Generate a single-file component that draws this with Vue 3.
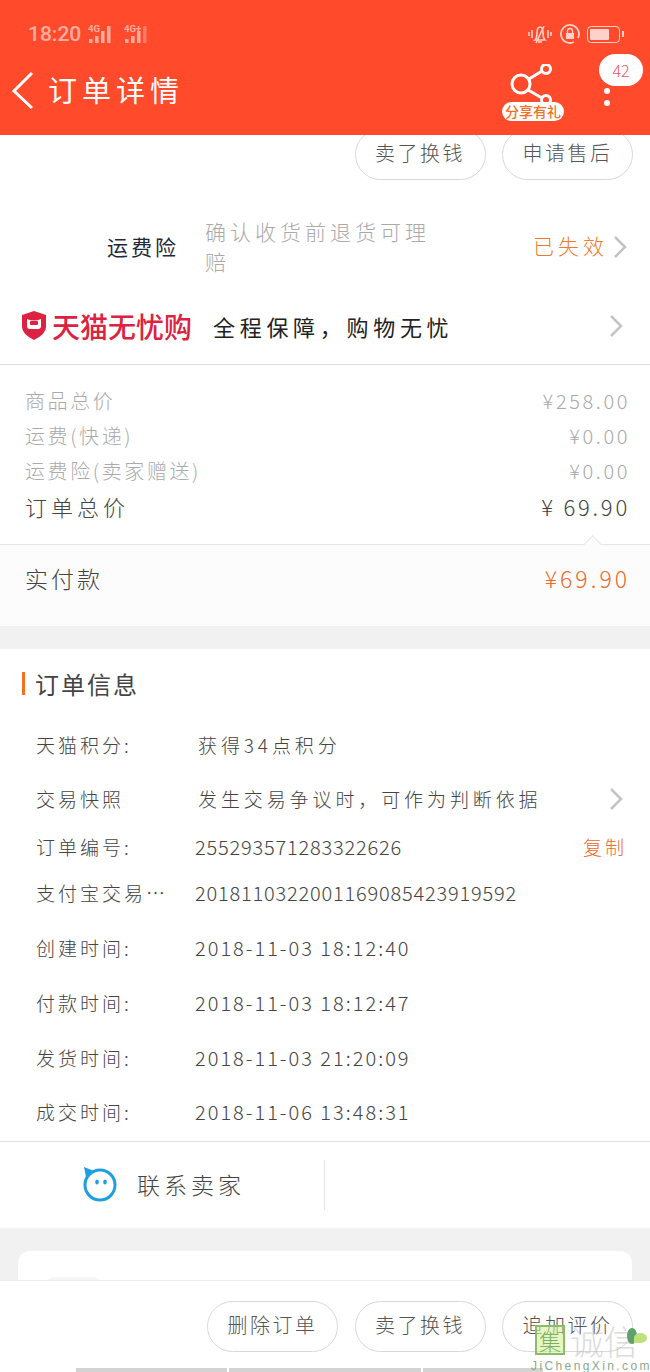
<script setup>
const feeRows = [
  { label: "商品总价", value: "¥258.00" },
  { label: "运费(快递)", value: "¥0.00" },
  { label: "运费险(卖家赠送)", value: "¥0.00" },
];

const infoRows = [
  { label: "天猫积分:", value: "获得34点积分", h: 54, kind: "wide" },
  { label: "交易快照", value: "发生交易争议时，可作为判断依据", h: 54, kind: "wide", arrow: true },
  { label: "订单编号:", value: "255293571283322626", h: 42, copy: true },
  { label: "支付宝交易…", value: "2018110322001169085423919592", h: 50 },
  { label: "创建时间:", value: "2018-11-03 18:12:40", h: 60, kind: "date" },
  { label: "付款时间:", value: "2018-11-03 18:12:47", h: 50, kind: "date" },
  { label: "发货时间:", value: "2018-11-03 21:20:09", h: 60, kind: "date" },
  { label: "成交时间:", value: "2018-11-06 13:48:31", h: 48, kind: "date" },
];
</script>

<template>
  <div class="page">
    <header class="header">
      <div class="status">
        <div class="status__left">
          <span class="status__time">18:20</span>
          <svg width="28" height="20" viewBox="0 0 28 20">
            <text x="0" y="8" font-size="9.5" font-weight="700" fill="#fff" font-family="Roboto, sans-serif">4G</text>
            <rect x="1" y="15" width="3.5" height="4" fill="#fff" />
            <rect x="7" y="12" width="3.5" height="7" fill="#fff" />
            <rect x="13" y="7" width="3.5" height="12" fill="#fff" />
            <rect x="19" y="2" width="3.5" height="17" fill="#fff" />
          </svg>
          <svg width="30" height="20" viewBox="0 0 30 20">
            <text x="1" y="8" font-size="9.5" font-weight="700" fill="#fff" font-family="Roboto, sans-serif">4G+</text>
            <rect x="2" y="15" width="3.5" height="4" fill="#fff" />
            <rect x="8" y="12" width="3.5" height="7" fill="#fff" />
            <rect x="14" y="7" width="3.5" height="12" fill="#fff" />
            <rect x="20" y="2" width="3.5" height="17" fill="#fff" opacity="0.5" />
          </svg>
        </div>
        <div class="status__right">
          <svg width="26" height="22" viewBox="0 0 26 22" fill="none" stroke="#fff" stroke-width="1.6">
            <path d="M8 17 Q10 15 10 10 Q10 4 13 4 Q16 4 16 10 Q16 15 18 17 Z" />
            <path d="M11 19h4M17 3 L9 20M5 7v8M2 9v4M21 7v8M24 9v4" />
          </svg>
          <svg width="22" height="22" viewBox="0 0 22 22" fill="none" stroke="#fff" stroke-width="1.8">
            <path d="M19 15 A9 9 0 1 0 15 19" />
            <rect x="7" y="10" width="8" height="6" fill="#fff" stroke="none" />
            <path d="M8.5 10V8a2.5 2.5 0 0 1 5 0v2" stroke-width="1.3" />
          </svg>
          <div class="battery"><div class="battery__fill"></div></div>
        </div>
      </div>
      <div class="nav">
        <svg class="nav__back" width="24" height="40" viewBox="0 0 24 40" fill="none" stroke="#fff" stroke-width="3">
          <path d="M21 2 L3 20 L21 37" />
        </svg>
        <h1 class="nav__title">订单详情</h1>
      </div>
      <div class="share">
        <svg width="50" height="50" viewBox="0 0 50 50" fill="none" stroke="#fff" stroke-width="3">
          <circle cx="16" cy="20" r="9" />
          <circle cx="41" cy="5" r="4.5" />
          <circle cx="41" cy="36" r="4.5" />
          <path d="M24 15 L37 7M23 26 L37 34" />
        </svg>
        <span class="share__label">分享有礼</span>
      </div>
      <span class="badge">42</span>
      <div class="more"><i></i><i></i></div>
    </header>

    <main class="content">
      <div class="actions actions--top">
        <button type="button" class="btn">卖了换钱</button>
        <button type="button" class="btn">申请售后</button>
      </div>

      <div class="insure">
        <span class="insure__label">运费险</span>
        <p class="insure__desc">确认收货前退货可理赔</p>
        <span class="insure__state">已失效</span>
        <svg class="chevron" width="14" height="22" viewBox="0 0 14 22" fill="none">
          <path d="M2 1 L12 11 L2 21" />
        </svg>
      </div>

      <div class="tmall">
        <svg width="26" height="29" viewBox="0 0 26 29">
          <path d="M13 0 L25 4 V16 Q25 23 13 29 Q1 23 1 16 V4 Z" fill="#dc2240" />
          <path d="M6 8 Q13 11 20 8 V15 Q20 18 17 18 H9 Q6 18 6 15 Z" fill="#fff" />
          <rect x="9" y="10" width="8" height="4" rx="1" fill="#dc2240" />
        </svg>
        <span class="tmall__brand">天猫无忧购</span>
        <span class="tmall__text">全程保障，购物无忧</span>
        <svg class="chevron" width="14" height="22" viewBox="0 0 14 22" fill="none">
          <path d="M2 1 L12 11 L2 21" />
        </svg>
      </div>

      <section class="fees">
        <div v-for="row in feeRows" :key="row.label" class="fee">
          <span>{{ row.label }}</span>
          <span>{{ row.value }}</span>
        </div>
        <div class="fee fee--total">
          <span>订单总价</span>
          <span class="fee__total">¥ 69.90</span>
        </div>
      </section>

      <section class="paid">
        <span class="paid__notch"></span>
        <span>实付款</span>
        <span class="paid__value">¥69.90</span>
      </section>

      <section class="info">
        <h2 class="info__title">订单信息</h2>
        <div
          v-for="row in infoRows"
          :key="row.label"
          class="info__row"
          :style="{ height: row.h + 'px' }"
        >
          <span class="info__label">{{ row.label }}</span>
          <span class="info__value" :class="row.kind && 'info__value--' + row.kind">{{ row.value }}</span>
          <span v-if="row.copy" class="info__copy">复制</span>
          <svg v-if="row.arrow" class="chevron info__arrow" width="14" height="22" viewBox="0 0 14 22" fill="none">
            <path d="M2 1 L12 11 L2 21" />
          </svg>
        </div>
      </section>

      <section class="contact">
        <div class="contact__cell">
          <svg width="36" height="36" viewBox="0 0 36 36" fill="none">
            <circle cx="18" cy="19" r="15" stroke="#1f9fe0" stroke-width="3" />
            <path d="M2 1 L12 5 L4 11 Z" fill="#1f9fe0" />
            <ellipse cx="15" cy="16" rx="1.8" ry="2.6" fill="#1f9fe0" />
            <ellipse cx="23" cy="16" rx="1.8" ry="2.6" fill="#1f9fe0" />
          </svg>
          <span class="contact__text">联系卖家</span>
        </div>
        <div class="contact__cell contact__cell--empty"></div>
      </section>

      <section class="peek">
        <div class="peek__card"><div class="peek__chip"></div></div>
      </section>
    </main>

    <footer class="footer">
      <div class="actions">
        <button type="button" class="btn">删除订单</button>
        <button type="button" class="btn">卖了换钱</button>
        <button type="button" class="btn">追加评价</button>
      </div>
      <div class="footer__bars"><i></i><i></i><i></i></div>
    </footer>

    <div class="mark">
      <span class="mark__box">集</span>
      <span class="mark__cn">诚信</span>
      <span class="mark__leaf"></span>
      <span class="mark__en">JiChengXin.com</span>
    </div>
  </div>
</template>

<style>
html,
body {
  margin: 0;
  background: #fff;
}
</style>

<style scoped>
.page {
  position: relative;
  width: 650px;
  height: 1372px;
  overflow: hidden;
  display: flex;
  flex-direction: column;
  background: #fff;
  color: #444;
  font-family: "Noto Sans CJK SC", "Noto Sans", sans-serif;
  font-weight: 300;
}

.header {
  position: relative;
  flex: none;
  height: 135px;
  background: #ff4a2c;
  color: #fff;
}

.status {
  height: 67px;
  box-sizing: border-box;
  padding: 23px 28px 0;
  display: flex;
  justify-content: space-between;
  align-items: flex-start;
}

.status__left,
.status__right {
  display: flex;
  align-items: center;
  height: 22px;
}

.status__left {
  gap: 7px;
  opacity: 0.55;
}

.status__right {
  gap: 6px;
  margin-right: -1px;
  opacity: 0.75;
}

.status__time {
  font: 500 21px Roboto, sans-serif;
}

.battery {
  position: relative;
  width: 33px;
  height: 17px;
  box-sizing: border-box;
  border: 1.5px solid #fff;
  border-radius: 4px;
  padding: 2px;
  margin-right: 3px;
}

.battery::after {
  content: "";
  position: absolute;
  right: -5px;
  top: 4px;
  width: 2px;
  height: 6px;
  background: #fff;
}

.battery__fill {
  width: 70%;
  height: 100%;
  border-radius: 1px;
  background: #fff;
}

.nav {
  display: flex;
  align-items: center;
  gap: 14px;
  padding-left: 11px;
  height: 48px;
}

.nav__title {
  margin: -4px 0 0 -1px;
  font-size: 29px;
  font-weight: 400;
  letter-spacing: 5px;
}

.share {
  position: absolute;
  left: 502px;
  top: 64px;
  width: 62px;
  height: 58px;
}

.share svg {
  position: absolute;
  left: 3px;
  top: 0;
}

.share__label {
  position: absolute;
  left: 0;
  top: 38px;
  width: 62px;
  height: 19px;
  border-radius: 10px;
  background: #fff;
  color: #f2701e;
  font-size: 14px;
  font-weight: 500;
  line-height: 19px;
  text-align: center;
  white-space: nowrap;
}

.badge {
  position: absolute;
  left: 599px;
  top: 54px;
  width: 44px;
  height: 32px;
  border-radius: 16px;
  background: #fff;
  color: #e8545c;
  font-size: 16px;
  line-height: 32px;
  text-align: center;
}

.more {
  position: absolute;
  left: 604px;
  top: 88px;
  display: flex;
  flex-direction: column;
  gap: 6px;
}

.more i {
  width: 6px;
  height: 6px;
  border-radius: 50%;
  background: #fff;
}

.content {
  flex: 1;
  min-height: 0;
  overflow: hidden;
}

.actions {
  display: flex;
  justify-content: flex-end;
  gap: 16.5px;
  padding-right: 17px;
}

.actions--top {
  height: 45px;
  align-items: flex-end;
  overflow: hidden;
}

.btn {
  flex: none;
  width: 131px;
  height: 51px;
  padding: 0 0 5px;
  border: 1px solid #d8d8d8;
  border-radius: 26px;
  background: #fff;
  color: #555;
  font-family: inherit;
  font-size: 20px;
  font-weight: 300;
  letter-spacing: 2.5px;
}

.insure {
  height: 118px;
  display: flex;
  align-items: center;
  padding: 16px 23px 0 107px;
  box-sizing: border-box;
}

.insure__label {
  width: 98px;
  flex: none;
  padding-bottom: 3px;
  color: #1c2a3c;
  font-size: 21px;
  font-weight: 400;
  letter-spacing: 3px;
}

.insure__desc {
  width: 228px;
  flex: none;
  margin: 0;
  padding-bottom: 3px;
  color: #aaa;
  font-size: 21px;
  line-height: 30px;
  letter-spacing: 4px;
}

.insure__state {
  margin-left: auto;
  margin-right: 5px;
  padding-bottom: 4px;
  color: #f07a2c;
  font-size: 21px;
  letter-spacing: 4px;
}

.chevron path {
  stroke: #c4c4c4;
  stroke-width: 2.5;
}

.tmall {
  height: 67px;
  box-sizing: border-box;
  display: flex;
  align-items: center;
  padding: 0 27px 11px 21px;
  border-bottom: 1px solid #dcdcdc;
}

.tmall__brand {
  margin-left: 5px;
  color: #dc2240;
  font-size: 28px;
  font-weight: 500;
  white-space: nowrap;
}

.tmall__text {
  margin-left: 21px;
  margin-right: auto;
  color: #222;
  font-size: 22px;
  font-weight: 400;
  letter-spacing: 4.7px;
}

.fees {
  height: 180px;
  padding: 18px 20px 0 25px;
  box-sizing: border-box;
  border-bottom: 1px solid #e6e6e6;
}

.fee {
  height: 35px;
  display: flex;
  justify-content: space-between;
  align-items: center;
  color: #aaa;
  font-size: 20px;
  letter-spacing: 2.6px;
}

.fee--total {
  height: 38px;
  margin-top: -1px;
  color: #444;
  font-size: 22px;
  letter-spacing: 4px;
}

.fee__total {
  letter-spacing: 2.8px;
}

.paid {
  position: relative;
  height: 81px;
  display: flex;
  justify-content: space-between;
  align-items: center;
  padding: 0 20px 15px 25px;
  box-sizing: border-box;
  background: #fcfcfc;
  font-size: 23px;
  letter-spacing: 3px;
}

.paid__notch {
  position: absolute;
  left: 586px;
  top: -7px;
  width: 13px;
  height: 13px;
  box-sizing: border-box;
  border-top: 1px solid #e6e6e6;
  border-left: 1px solid #e6e6e6;
  background: #fcfcfc;
  transform: rotate(45deg);
}

.paid__value {
  color: #ec6a2a;
}

.info {
  border-top: 23px solid #f1f1f1;
  border-bottom: 1px solid #e2e2e2;
  padding-bottom: 4px;
}

.info__title {
  margin: 0 0 0 22px;
  height: 70px;
  box-sizing: border-box;
  padding-bottom: 2px;
  display: flex;
  align-items: center;
  font-size: 24px;
  font-weight: 400;
  letter-spacing: 2px;
}

.info__title::before {
  content: "";
  width: 3px;
  height: 23px;
  margin-right: 10px;
  background: #f2701e;
}

.info__row {
  display: flex;
  align-items: center;
  box-sizing: border-box;
  padding: 0 23px 3px 36px;
  font-size: 19px;
  letter-spacing: 3px;
}

.info__label {
  width: 159px;
  flex: none;
  white-space: nowrap;
}

.info__value {
  white-space: nowrap;
  font-size: 20px;
  letter-spacing: 0.8px;
}

.info__value--wide {
  margin-left: 3px;
  font-size: 19px;
  letter-spacing: 3.9px;
}

.info__value--date {
  letter-spacing: 2px;
}

.info__arrow {
  margin-left: auto;
  margin-right: 4px;
}

.info__copy {
  margin-left: auto;
  color: #ec6a2a;
  letter-spacing: 3px;
}

.contact {
  height: 86px;
  display: flex;
  align-items: center;
}

.contact__cell {
  width: 326px;
  height: 50px;
  box-sizing: border-box;
  display: flex;
  align-items: center;
  gap: 19px;
  padding: 0 0 3px 82px;
  border-right: 1px solid #e6e6e6;
}

.contact__cell--empty {
  border: 0;
}

.contact__text {
  font-size: 23px;
  letter-spacing: 4px;
}

.peek {
  height: 100px;
  box-sizing: border-box;
  padding: 23px 18px 0;
  background: #f1f1f1;
}

.peek__card {
  height: 70px;
  padding: 26px 0 0 27px;
  box-sizing: border-box;
  border-radius: 12px;
  background: #fff;
}

.peek__chip {
  width: 58px;
  height: 20px;
  border-radius: 10px;
  background: #f6f6f6;
}

.footer {
  flex: none;
  height: 92px;
  box-sizing: border-box;
  padding-top: 20px;
  border-top: 1px solid #ececec;
  background: #fff;
}

.footer__bars {
  display: flex;
  gap: 2px;
  margin: 16px 0 0 76px;
}

.footer__bars i {
  height: 4px;
  background: #d3d3d3;
}

.footer__bars i:nth-child(1) {
  width: 151px;
}

.footer__bars i:nth-child(2) {
  width: 192px;
}

.footer__bars i:nth-child(3) {
  width: 120px;
}

.mark {
  position: absolute;
  left: 530px;
  top: 1322px;
  width: 120px;
  height: 50px;
}

.mark__box {
  position: absolute;
  left: 5px;
  top: 3px;
  width: 30px;
  height: 30px;
  border: 2px solid #8dbb6a;
  box-sizing: border-box;
  background: rgba(205, 240, 150, 0.55);
  color: #7fae5c;
  font-size: 22px;
  line-height: 26px;
  text-align: center;
}

.mark__cn {
  position: absolute;
  left: 40px;
  top: 0;
  color: rgba(190, 190, 190, 0.55);
  font-size: 34px;
  line-height: 38px;
  white-space: nowrap;
}

.mark__leaf {
  position: absolute;
  left: 97px;
  top: 6px;
  width: 10px;
  height: 16px;
  border-radius: 50%;
  background: #5fa06b;
}

.mark__leaf::after {
  content: "";
  position: absolute;
  left: 7px;
  top: 5px;
  width: 13px;
  height: 10px;
  border-radius: 50% 50% 50% 0;
  background: #bde27a;
}

.mark__en {
  position: absolute;
  left: 1px;
  top: 37px;
  color: #8aa98a;
  font: 12px "Liberation Sans", sans-serif;
  letter-spacing: 2.4px;
  white-space: nowrap;
}
</style>
